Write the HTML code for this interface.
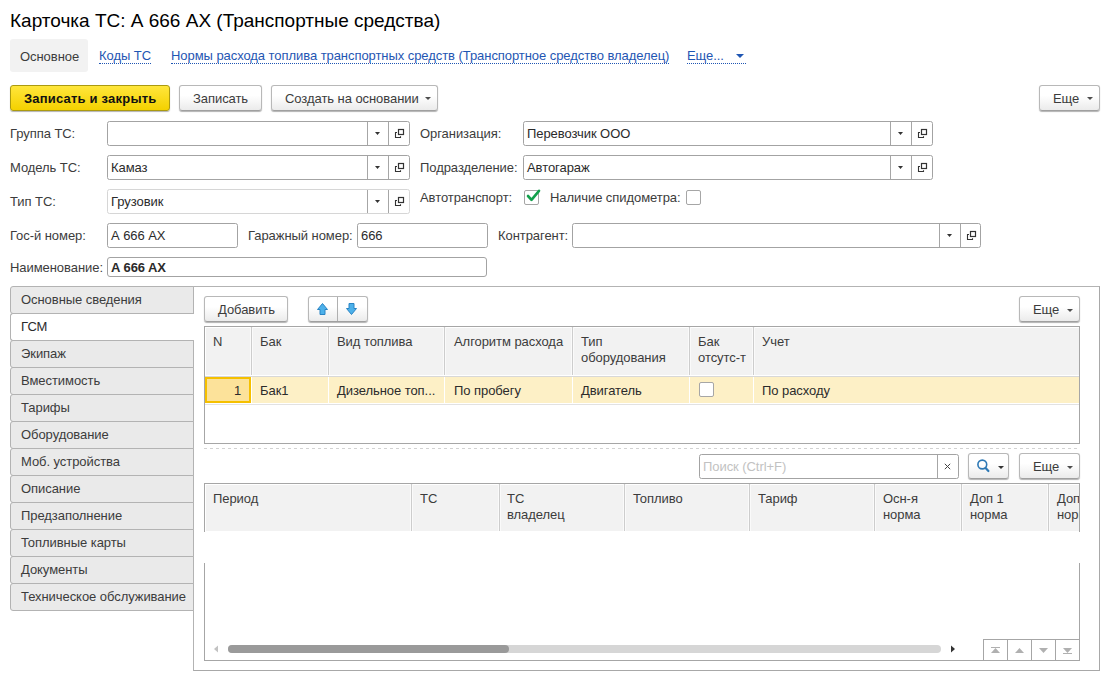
<!DOCTYPE html>
<html><head><meta charset="utf-8">
<style>
html,body{margin:0;padding:0;background:#fff;width:1115px;height:678px;overflow:hidden;position:relative}
*{box-sizing:border-box}
.t{position:absolute;font-family:"Liberation Sans",sans-serif;font-size:13px;line-height:15px;white-space:nowrap;color:#3c3c3c;letter-spacing:-0.06px}
.v{color:#2b2b2b}
.b{position:absolute}
svg{position:absolute;overflow:visible}
.lnk{color:#1f56b3;border-bottom:1px dotted #1f56b3;line-height:14px}
.btn{position:absolute;border:1px solid #b8b8b8;border-bottom-color:#a0a0a0;border-radius:3px;background:linear-gradient(#fff 0%,#fff 40%,#ebebeb 100%);box-shadow:0 1px 1px rgba(0,0,0,.3)}
.inp{position:absolute;border:1px solid #a3a3a3;border-radius:2.5px;background:#fff}
.sep{position:absolute;top:0;bottom:0;width:1px;background:#a6a6a6}
.vt{position:absolute;left:10px;width:184px;height:28px;border:1px solid #b3b3b3;border-radius:3px 0 0 3px;background:#eaeaea}
.hd{position:absolute;background:#f2f2f2}
.cs{position:absolute;width:1px;background:#cdcdcd;box-shadow:-1px 0 #fafafa,1px 0 #fafafa}
.cw{position:absolute;width:1px;background:#fff}
.cb{position:absolute;width:15px;height:15px;border:1px solid #a6a6a6;border-radius:2px;background:#fff}
</style></head><body>

<!-- title -->
<div class="t" style="left:10px;top:10px;font-size:19px;line-height:22px;color:#000;letter-spacing:0">Карточка ТС: А 666 АХ (Транспортные средства)</div>

<!-- tabs bar -->
<div class="b" style="left:10px;top:39px;width:78px;height:33px;background:#f2f2f2;border-radius:3px"></div>
<div class="t" style="left:20px;top:49px">Основное</div>
<div class="t lnk" style="left:99px;top:49px">Коды ТС</div>
<div class="t lnk" style="left:171px;top:49px">Нормы расхода топлива транспортных средств (Транспортное средство владелец)</div>
<div class="t lnk" style="left:687px;top:49px;width:59px">Еще...</div>
<svg style="left:736px;top:54px" width="8" height="5"><polygon points="0,0 8,0 4,4" fill="#1f56b3"/></svg>

<!-- command bar -->
<div class="b" style="left:10px;top:85px;width:160px;height:26px;border:1px solid #ab9a10;border-radius:3px;background:linear-gradient(#ffe63c,#f4d100);box-shadow:0 1px 1px rgba(0,0,0,.3)"></div>
<div class="t" style="left:24px;top:91px;font-weight:bold;color:#111;letter-spacing:0.2px">Записать и закрыть</div>
<div class="btn" style="left:179px;top:85px;width:83px;height:26px"></div>
<div class="t" style="left:193px;top:91px">Записать</div>
<div class="btn" style="left:271px;top:85px;width:167px;height:26px"></div>
<div class="t" style="left:285px;top:91px">Создать на основании</div>
<svg style="left:425px;top:97px" width="6" height="4"><polygon points="0,0 6,0 3,3" fill="#4d4d4d"/></svg>
<div class="btn" style="left:1039px;top:85px;width:61px;height:26px"></div>
<div class="t" style="left:1053px;top:91px">Еще</div>
<svg style="left:1087px;top:97px" width="6" height="4"><polygon points="0,0 6,0 3,3" fill="#4d4d4d"/></svg>

<!-- fields -->
<div class="t" style="left:10px;top:126px">Группа ТС:</div>
<div class="inp" style="left:107px;top:121px;width:303px;height:25px"><div class="sep" style="left:259px"></div><div class="sep" style="left:280px"></div></div>
<svg style="left:374px;top:132px" width="6" height="4"><polygon points="1,0 6,0 3.5,3" fill="#333"/></svg>
<svg style="left:394px;top:128px" width="12" height="11"><rect x="4.5" y="1.5" width="5" height="5" fill="none" stroke="#333" stroke-width="1.2"/><path d="M3,4.5 H1.5 V9.5 H6.5 V8.3" fill="none" stroke="#333" stroke-width="1.1"/></svg>
<div class="t" style="left:420px;top:126px">Организация:</div>
<div class="inp" style="left:523px;top:121px;width:410px;height:25px"><div class="sep" style="left:366px"></div><div class="sep" style="left:387px"></div></div>
<svg style="left:897px;top:132px" width="6" height="4"><polygon points="1,0 6,0 3.5,3" fill="#333"/></svg>
<svg style="left:917px;top:128px" width="12" height="11"><rect x="4.5" y="1.5" width="5" height="5" fill="none" stroke="#333" stroke-width="1.2"/><path d="M3,4.5 H1.5 V9.5 H6.5 V8.3" fill="none" stroke="#333" stroke-width="1.1"/></svg>
<div class="t v" style="left:527px;top:126px">Перевозчик ООО</div>

<div class="t" style="left:10px;top:160px">Модель ТС:</div>
<div class="inp" style="left:107px;top:155px;width:303px;height:25px"><div class="sep" style="left:259px"></div><div class="sep" style="left:280px"></div></div>
<svg style="left:374px;top:166px" width="6" height="4"><polygon points="1,0 6,0 3.5,3" fill="#333"/></svg>
<svg style="left:394px;top:162px" width="12" height="11"><rect x="4.5" y="1.5" width="5" height="5" fill="none" stroke="#333" stroke-width="1.2"/><path d="M3,4.5 H1.5 V9.5 H6.5 V8.3" fill="none" stroke="#333" stroke-width="1.1"/></svg>
<div class="t v" style="left:111px;top:160px">Камаз</div>
<div class="t" style="left:420px;top:160px">Подразделение:</div>
<div class="inp" style="left:523px;top:155px;width:410px;height:25px"><div class="sep" style="left:366px"></div><div class="sep" style="left:387px"></div></div>
<svg style="left:897px;top:166px" width="6" height="4"><polygon points="1,0 6,0 3.5,3" fill="#333"/></svg>
<svg style="left:917px;top:162px" width="12" height="11"><rect x="4.5" y="1.5" width="5" height="5" fill="none" stroke="#333" stroke-width="1.2"/><path d="M3,4.5 H1.5 V9.5 H6.5 V8.3" fill="none" stroke="#333" stroke-width="1.1"/></svg>
<div class="t v" style="left:527px;top:160px">Автогараж</div>

<div class="t" style="left:10px;top:194px">Тип ТС:</div>
<div class="inp" style="left:107px;top:189px;width:303px;height:25px;border-color:#d6d6d6"><div class="sep" style="left:259px"></div><div class="sep" style="left:280px"></div></div>
<svg style="left:374px;top:200px" width="6" height="4"><polygon points="1,0 6,0 3.5,3" fill="#333"/></svg>
<svg style="left:394px;top:196px" width="12" height="11"><rect x="4.5" y="1.5" width="5" height="5" fill="none" stroke="#333" stroke-width="1.2"/><path d="M3,4.5 H1.5 V9.5 H6.5 V8.3" fill="none" stroke="#333" stroke-width="1.1"/></svg>
<div class="t v" style="left:111px;top:194px">Грузовик</div>
<div class="t" style="left:420px;top:190px">Автотранспорт:</div>
<div class="cb" style="left:524px;top:190px"></div>
<svg style="left:0;top:0" width="1" height="1"><path d="M528,196 L531.5,199.8 L539,190.8" fill="none" stroke="#13a04c" stroke-width="2.6" stroke-linecap="round" stroke-linejoin="round"/></svg>
<div class="t" style="left:550px;top:190px">Наличие спидометра:</div>
<div class="cb" style="left:686px;top:190px"></div>

<div class="t" style="left:10px;top:228px">Гос-й номер:</div>
<div class="inp" style="left:107px;top:223px;width:131px;height:25px"></div>
<div class="t v" style="left:111px;top:228px">А 666 АХ</div>
<div class="t" style="left:248px;top:228px">Гаражный номер:</div>
<div class="inp" style="left:357px;top:223px;width:131px;height:25px"></div>
<div class="t v" style="left:361px;top:228px">666</div>
<div class="t" style="left:498px;top:228px">Контрагент:</div>
<div class="inp" style="left:572px;top:223px;width:409px;height:25px"><div class="sep" style="left:366px"></div><div class="sep" style="left:387px"></div></div>
<svg style="left:946px;top:234px" width="6" height="4"><polygon points="1,0 6,0 3.5,3" fill="#333"/></svg>
<svg style="left:966px;top:230px" width="12" height="11"><rect x="4.5" y="1.5" width="5" height="5" fill="none" stroke="#333" stroke-width="1.2"/><path d="M3,4.5 H1.5 V9.5 H6.5 V8.3" fill="none" stroke="#333" stroke-width="1.1"/></svg>

<div class="t" style="left:10px;top:260px">Наименование:</div>
<div class="inp" style="left:107px;top:257px;width:380px;height:20px;border-radius:3px"></div>
<div class="t v" style="left:111px;top:260px;font-weight:bold;letter-spacing:-0.2px">А 666 АХ</div>

<!-- panel -->
<div class="b" style="left:193px;top:286px;width:907px;height:385px;border:1px solid #b3b3b3;border-right-color:#a8a8a8;border-bottom-color:#a8a8a8"></div>

<!-- vertical tabs -->
<div class="vt" style="top:286px"></div><div class="t" style="left:21px;top:292px">Основные сведения</div>
<div class="vt" style="top:313px;background:#fff;border-right:none;width:184px"></div><div class="t v" style="left:21px;top:319px">ГСМ</div>
<div class="vt" style="top:340px"></div><div class="t" style="left:21px;top:346px">Экипаж</div>
<div class="vt" style="top:367px"></div><div class="t" style="left:21px;top:373px">Вместимость</div>
<div class="vt" style="top:394px"></div><div class="t" style="left:21px;top:400px">Тарифы</div>
<div class="vt" style="top:421px"></div><div class="t" style="left:21px;top:427px">Оборудование</div>
<div class="vt" style="top:448px"></div><div class="t" style="left:21px;top:454px">Моб. устройства</div>
<div class="vt" style="top:475px"></div><div class="t" style="left:21px;top:481px">Описание</div>
<div class="vt" style="top:502px"></div><div class="t" style="left:21px;top:508px">Предзаполнение</div>
<div class="vt" style="top:529px"></div><div class="t" style="left:21px;top:535px">Топливные карты</div>
<div class="vt" style="top:556px"></div><div class="t" style="left:21px;top:562px">Документы</div>
<div class="vt" style="top:583px"></div><div class="t" style="left:21px;top:589px">Техническое обслуживание</div>

<!-- GSM toolbar -->
<div class="btn" style="left:204px;top:296px;width:84px;height:26px"></div>
<div class="t" style="left:218px;top:302px">Добавить</div>
<div class="btn" style="left:308px;top:296px;width:60px;height:26px"></div>
<div class="b" style="left:337px;top:297px;width:1px;height:24px;background:#b0b0b0"></div>
<svg style="left:316px;top:302px" width="14" height="14"><polygon points="1.5,7.5 6.5,1.5 11.5,7.5 9,7.5 9,12.5 4,12.5 4,7.5" fill="#4db1ea" stroke="#2a84c4" stroke-width="1"/></svg>
<svg style="left:345px;top:302px" width="14" height="14"><polygon points="1.5,6.5 4,6.5 4,1.5 9,1.5 9,6.5 11.5,6.5 6.5,12.5" fill="#4db1ea" stroke="#2a84c4" stroke-width="1"/></svg>
<div class="btn" style="left:1019px;top:296px;width:61px;height:26px"></div>
<div class="t" style="left:1033px;top:302px">Еще</div>
<svg style="left:1067px;top:309px" width="6" height="4"><polygon points="0,0 6,0 3,3" fill="#4d4d4d"/></svg>

<!-- table 1 -->
<div class="b" style="left:204px;top:326px;width:876px;height:118px;border:1px solid #a6a6a6;background:#fff"></div>
<div class="hd" style="left:206px;top:328px;width:873px;height:47px"></div>
<div class="b" style="left:205px;top:376px;width:874px;height:1px;background:#d8d8d8"></div>
<div class="cs" style="left:251px;top:327px;height:48px"></div>
<div class="cs" style="left:328px;top:327px;height:48px"></div>
<div class="cs" style="left:444px;top:327px;height:48px"></div>
<div class="cs" style="left:572px;top:327px;height:48px"></div>
<div class="cs" style="left:689px;top:327px;height:48px"></div>
<div class="cs" style="left:753px;top:327px;height:48px"></div>
<div class="t" style="left:213px;top:334px">N</div>
<div class="t" style="left:260px;top:334px">Бак</div>
<div class="t" style="left:337px;top:334px">Вид топлива</div>
<div class="t" style="left:454px;top:334px">Алгоритм расхода</div>
<div class="t" style="left:581px;top:334px;line-height:16px">Тип<br>оборудования</div>
<div class="t" style="left:698px;top:334px;line-height:16px">Бак<br>отсутс-т</div>
<div class="t" style="left:762px;top:334px">Учет</div>
<div class="b" style="left:205px;top:377px;width:874px;height:26px;background:#fdf0c6"></div>
<div class="b" style="left:205px;top:404px;width:874px;height:1px;background:#e2e2e2"></div>
<div class="cw" style="left:251px;top:377px;height:26px"></div>
<div class="cw" style="left:328px;top:377px;height:26px"></div>
<div class="cw" style="left:444px;top:377px;height:26px"></div>
<div class="cw" style="left:572px;top:377px;height:26px"></div>
<div class="cw" style="left:689px;top:377px;height:26px"></div>
<div class="cw" style="left:753px;top:377px;height:26px"></div>
<div class="b" style="left:205px;top:377px;width:46px;height:26px;background:#fce29a;border:2px solid #f5c000"></div>
<div class="t v" style="left:234px;top:383px">1</div>
<div class="t v" style="left:260px;top:383px">Бак1</div>
<div class="t v" style="left:337px;top:383px">Дизельное топ...</div>
<div class="t v" style="left:454px;top:383px">По пробегу</div>
<div class="t v" style="left:581px;top:383px">Двигатель</div>
<div class="cb" style="left:699px;top:382px"></div>
<div class="t v" style="left:762px;top:383px">По расходу</div>

<!-- dashed -->
<div class="b" style="left:204px;top:448px;width:873px;height:1px;background:repeating-linear-gradient(90deg,#d2d2d2 0 3px,transparent 3px 6px)"></div>

<!-- search row -->
<div class="inp" style="left:699px;top:454px;width:260px;height:25px"><div class="sep" style="left:237px"></div></div>
<div class="t" style="left:703px;top:459px;color:#c2c2c2">Поиск (Ctrl+F)</div>
<svg style="left:944px;top:463px" width="7" height="7"><path d="M0.8,0.8 L6.2,6.2 M6.2,0.8 L0.8,6.2" stroke="#444" stroke-width="1"/></svg>
<div class="btn" style="left:968px;top:453px;width:41px;height:26px"></div>
<svg style="left:976px;top:459px" width="14" height="14"><circle cx="6.3" cy="5.5" r="4.4" fill="none" stroke="#2e79b5" stroke-width="1.6"/><path d="M9.6,8.9 L12.4,12" stroke="#2e79b5" stroke-width="2.2" stroke-linecap="round"/></svg>
<svg style="left:998px;top:466px" width="6" height="4"><polygon points="0,0 6,0 3,3" fill="#333"/></svg>
<div class="btn" style="left:1019px;top:453px;width:61px;height:26px"></div>
<div class="t" style="left:1033px;top:459px">Еще</div>
<svg style="left:1067px;top:466px" width="6" height="4"><polygon points="0,0 6,0 3,3" fill="#4d4d4d"/></svg>

<!-- table 2 -->
<div class="b" style="left:204px;top:483px;width:876px;height:178px;border:1px solid #a6a6a6;background:#fff"></div>
<div class="b" style="left:204px;top:532px;width:877px;height:31px;background:#fff"></div>
<div class="hd" style="left:206px;top:485px;width:873px;height:46px"></div>
<div class="cs" style="left:411px;top:484px;height:47px"></div>
<div class="cs" style="left:499px;top:484px;height:47px"></div>
<div class="cs" style="left:624px;top:484px;height:47px"></div>
<div class="cs" style="left:749px;top:484px;height:47px"></div>
<div class="cs" style="left:874px;top:484px;height:47px"></div>
<div class="cs" style="left:961px;top:484px;height:47px"></div>
<div class="cs" style="left:1048px;top:484px;height:47px"></div>
<div class="t" style="left:213px;top:491px">Период</div>
<div class="t" style="left:420px;top:491px">ТС</div>
<div class="t" style="left:507px;top:491px;line-height:16px">ТС<br>владелец</div>
<div class="t" style="left:633px;top:491px">Топливо</div>
<div class="t" style="left:758px;top:491px">Тариф</div>
<div class="t" style="left:883px;top:491px;line-height:16px">Осн-я<br>норма</div>
<div class="t" style="left:970px;top:491px;line-height:16px">Доп 1<br>норма</div>
<div class="b" style="left:1049px;top:484px;width:30px;height:47px;overflow:hidden"><div class="t" style="left:8px;top:7px;line-height:16px">Доп<br>норма</div></div>

<!-- scrollbar -->
<svg style="left:213px;top:645px" width="6" height="8"><polygon points="5,0.5 5,7.5 1,4" fill="#c2c2c2"/></svg>
<div class="b" style="left:228px;top:645px;width:713px;height:8px;border-radius:4px;background:#d6d6d6"></div>
<div class="b" style="left:228px;top:645px;width:281px;height:8px;border-radius:4px;background:#9a9a9a"></div>
<svg style="left:950px;top:645px" width="6" height="8"><polygon points="1,0.5 1,7.5 5,4" fill="#333"/></svg>

<!-- nav buttons -->
<div class="b" style="left:983px;top:639px;width:97px;height:21px;border:1px solid #a6a6a6;border-bottom:none;background:#fff"></div>
<div class="b" style="left:1007px;top:639px;width:1px;height:21px;background:#a6a6a6"></div>
<div class="b" style="left:1031px;top:639px;width:1px;height:21px;background:#a6a6a6"></div>
<div class="b" style="left:1055px;top:639px;width:1px;height:21px;background:#a6a6a6"></div>
<svg style="left:990px;top:645px" width="12" height="10"><rect x="1" y="2" width="9" height="1" fill="#b0b0b0"/><polygon points="1,8 10,8 5.5,3" fill="#b0b0b0"/></svg>
<svg style="left:1014px;top:645px" width="12" height="10"><polygon points="1,8 10,8 5.5,3" fill="#b0b0b0"/></svg>
<svg style="left:1038px;top:645px" width="12" height="10"><polygon points="1,3 10,3 5.5,8" fill="#b0b0b0"/></svg>
<svg style="left:1062px;top:645px" width="12" height="10"><polygon points="1,3 10,3 5.5,8" fill="#b0b0b0"/><rect x="1" y="8" width="9" height="1" fill="#b0b0b0"/></svg>

</body></html>
